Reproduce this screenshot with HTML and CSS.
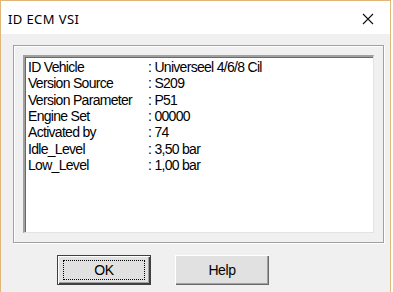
FILE: index.html
```html
<!DOCTYPE html>
<html lang="nl">
<head>
  <meta charset="UTF-8">
  <title>ID ECM VSI</title>
  <link rel="stylesheet" href="styles.css">
</head>
<body>

  <div class="window">
    <div class="titlebar">
      <span class="title">ID ECM VSI</span>
      <svg class="close" width="12" height="12" viewBox="0 0 12 12">
        <path d="M1 1 L11 11 M11 1 L1 11" stroke="#111" stroke-width="1.1" fill="none"/>
      </svg>
    </div>

    <div class="dialog">
      <div class="groupbox">
        <div class="listbox">
          <div class="row"><span class="label">ID Vehicle</span><span>: Universeel 4/6/8 Cil</span></div>
          <div class="row"><span class="label">Version Source</span><span>: S209</span></div>
          <div class="row"><span class="label">Version Parameter</span><span>: P51</span></div>
          <div class="row"><span class="label">Engine Set</span><span>: 00000</span></div>
          <div class="row"><span class="label">Activated by</span><span>: 74</span></div>
          <div class="row"><span class="label">Idle_Level</span><span>: 3,50 bar</span></div>
          <div class="row"><span class="label">Low_Level</span><span>: 1,00 bar</span></div>
        </div>
      </div>

      <div class="buttons">
        <button class="btn default"><span class="focus">OK</span></button>
        <button class="btn">Help</button>
      </div>
    </div>
  </div>

</body>
</html>
```

FILE: styles.css
```css
* {
  box-sizing: border-box;
}
body {
  margin: 0;
  padding: 0;
  background: #ffffff;
  width: 393px;
  height: 292px;
  overflow: hidden;
}
.window {
  width: 391px;
  height: 292px;
  border: 1px solid #e2b678;
  border-bottom: none;
  display: flex;
  flex-direction: column;
  background: #f0f0f0;
}
.titlebar {
  height: 33px;
  flex: none;
  background: #ffffff;
  display: flex;
  align-items: center;
  justify-content: space-between;
  padding: 0 16px 0 7px;
}
.title {
  font-family: 'Noto Sans', sans-serif;
  font-size: 13px;
  letter-spacing: 0.4px;
  color: #000;
  margin-top: 2px;
}
.close {
  margin-top: 2px;
}
.dialog {
  flex: 1;
  padding: 11px 6px 0 12px;
}
.groupbox {
  height: 198px;
  border: 1px solid #a0a0a0;
  box-shadow: inset 1px 1px 0 #ffffff, 1px 1px 0 #ffffff;
  padding: 9px 9px 0 9px;
}
.listbox {
  height: 178px;
  background: #ffffff;
  border-top: 2px solid #a0a0a0;
  border-left: 2px solid #a0a0a0;
  border-right: 1px solid #e3e3e3;
  border-bottom: 1px solid #e3e3e3;
  box-shadow: inset 1px 1px 0 #696969;
  padding: 2px 0 0 3px;
  font-family: 'Liberation Sans', Arial, sans-serif;
  font-size: 14px;
  letter-spacing: -0.7px;
  color: #000;
}
.row {
  display: flex;
  height: 16.35px;
  line-height: 16px;
}
.label {
  width: 120px;
}
.buttons {
  display: flex;
  gap: 24px;
  padding: 12px 0 0 44px;
}
.btn {
  width: 94px;
  height: 30px;
  background: #e1e1e1;
  border: none;
  border-radius: 0;
  box-shadow: inset 1px 1px 0 #ffffff, inset -1px -1px 0 #696969, inset -2px -2px 0 #a0a0a0;
  font-family: 'Liberation Sans', Arial, sans-serif;
  font-size: 14px;
  letter-spacing: -0.4px;
  color: #000;
  padding: 0;
  display: flex;
  align-items: center;
  justify-content: center;
}
.btn.default {
  border: 1px solid #404040;
  box-shadow: inset 1px 1px 0 #ffffff, inset -1px -1px 0 #404040, inset -2px -2px 0 #a0a0a0;
}
.focus {
  display: flex;
  align-items: center;
  justify-content: center;
  width: 82px;
  height: 20px;
  border: 1px dotted #000;
}
```
